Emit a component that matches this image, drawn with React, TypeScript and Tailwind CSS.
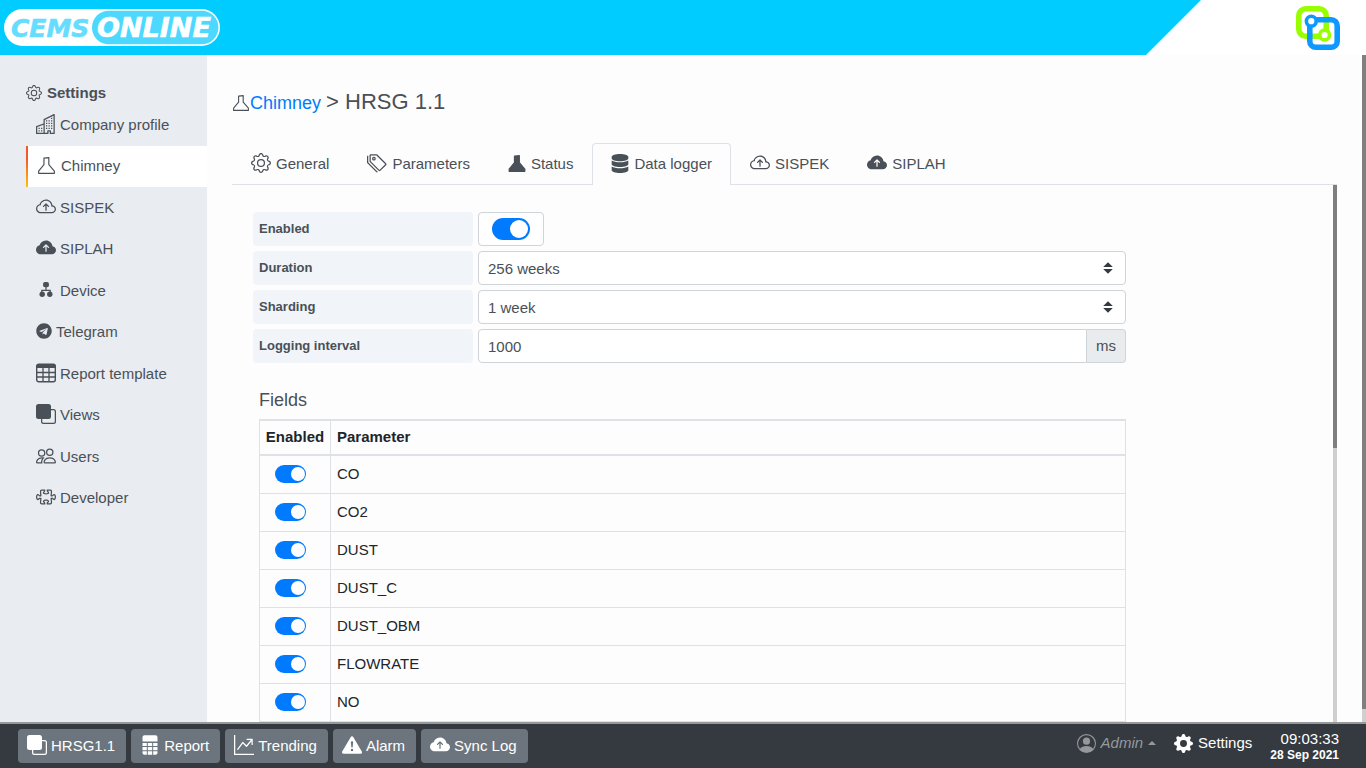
import { useState, type ReactNode } from "react";
import {
  BsBuildings,
  BsCloudArrowUp,
  BsCloudArrowUpFill,
  BsExclamationTriangleFill,
  BsFront,
  BsGear,
  BsGearFill,
  BsGraphUpArrow,
  BsPeople,
  BsPersonCircle,
  BsPuzzle,
  BsTags,
} from "react-icons/bs";
import { FaDatabase, FaTelegram } from "react-icons/fa";

function FlaskIcon({ filled = false, className }: { filled?: boolean; className?: string }) {
  return (
    <svg viewBox="0 0 16 16" className={className} aria-hidden="true">
      <path
        d="M5.6 1.1 10.2.6V7.2L15.4 13.2V15.4H.6V13.2L5.6 7.2Z"
        fill={filled ? "currentColor" : "none"}
        stroke="currentColor"
        strokeWidth="1.1"
        strokeLinejoin="round"
      />
    </svg>
  );
}

function DeviceIcon({ className }: { className?: string }) {
  return (
    <svg viewBox="0 0 20 20" className={className} aria-hidden="true">
      <rect x="7.1" y="2" width="5.8" height="5.2" rx="1.8" fill="currentColor" />
      <path d="M10 7v3.4M5.8 12v-1.6h8.4V12" fill="none" stroke="currentColor" strokeWidth="1.2" />
      <circle cx="6.2" cy="14.2" r="2.7" fill="currentColor" />
      <circle cx="13.8" cy="14.2" r="2.7" fill="currentColor" />
    </svg>
  );
}

function TableIcon({ className }: { className?: string }) {
  return (
    <svg viewBox="0 0 20 20" className={className} aria-hidden="true">
      <rect x=".7" y="1.2" width="18.6" height="17.6" rx="2" fill="none" stroke="currentColor" strokeWidth="1.4" />
      <path d="M.6 5V3a2 2 0 0 1 2-2h14.8a2 2 0 0 1 2 2v2Z" fill="currentColor" />
      <path d="M.6 9.5h18.8M.6 14h18.8M7 5v14M13 5v14" stroke="currentColor" strokeWidth="1.3" />
    </svg>
  );
}

function SheetIcon({ className }: { className?: string }) {
  return (
    <svg viewBox="0 0 16 20" className={className} fill="currentColor" aria-hidden="true">
      <path d="M.5 6.6V2.2A2 2 0 0 1 2.5.2h11a2 2 0 0 1 2 2v4.4Z" />
      <path d="M.5 8h4.3v3H.5ZM5.8 8h4.4v3H5.8ZM11.2 8h4.3v3h-4.3ZM.5 12h4.3v3.2H.5ZM5.8 12h4.4v3.2H5.8ZM11.2 12h4.3v3.2h-4.3ZM.5 16.2h4.3v3.6H2.5a2 2 0 0 1-2-2ZM5.8 16.2h4.4v3.6H5.8ZM11.2 16.2h4.3v1.6a2 2 0 0 1-2 2h-2.3Z" />
    </svg>
  );
}

function Wordmark() {
  return (
    <svg viewBox="0 0 216 37" className="ml-1 h-[37px] w-[216px]" role="img" aria-label="CEMS Online">
      <rect width="216" height="37" rx="18.5" fill="#fff" />
      <rect x="88" y="1.7" width="126.4" height="33.6" rx="16.8" fill="#4dd9ff" />
      <g fontFamily="'DejaVu Sans', sans-serif" fontWeight="700" fontStyle="italic" strokeWidth=".6">
        <text x="7" y="28" fontSize="25" fill="#66ddff" stroke="#66ddff">
          CEMS
        </text>
        <text x="93" y="28" fontSize="27" fill="#fff" stroke="#fff">
          ONLINE
        </text>
      </g>
    </svg>
  );
}

function BrandMark() {
  return (
    <svg viewBox="0 0 44 44" className="size-11" aria-hidden="true">
      <g fill="none" strokeWidth="5.6">
        <rect x="2.8" y="2.8" width="27.4" height="27.4" rx="7" stroke="#99ff00" />
        <rect x="13.8" y="13.8" width="27.4" height="27.4" rx="6" stroke="#0d99ff" />
      </g>
      <circle cx="15.3" cy="15.2" r="4.9" fill="#fff" stroke="#0d99ff" strokeWidth="3.6" />
      <circle cx="28.6" cy="29" r="4.9" fill="#fff" stroke="#99ff00" strokeWidth="3.6" />
    </svg>
  );
}

const menu: { label: string; icon: ReactNode; active?: boolean }[] = [
  { label: "Company profile", icon: <BsBuildings className="size-5" /> },
  { label: "Chimney", icon: <FlaskIcon className="h-[17px] w-[17px]" />, active: true },
  { label: "SISPEK", icon: <BsCloudArrowUp className="size-5" /> },
  { label: "SIPLAH", icon: <BsCloudArrowUpFill className="size-5" /> },
  { label: "Device", icon: <DeviceIcon className="size-5" /> },
  { label: "Telegram", icon: <FaTelegram className="size-4" /> },
  { label: "Report template", icon: <TableIcon className="size-5" /> },
  { label: "Views", icon: <BsFront className="size-5" /> },
  { label: "Users", icon: <BsPeople className="size-5" /> },
  { label: "Developer", icon: <BsPuzzle className="size-5" /> },
];

const tabs: { label: string; icon: ReactNode }[] = [
  { label: "General", icon: <BsGear className="size-5" /> },
  { label: "Parameters", icon: <BsTags className="size-5" /> },
  { label: "Status", icon: <FlaskIcon filled className="h-[17px] w-[18px]" /> },
  { label: "Data logger", icon: <FaDatabase className="h-[19px] w-[18px]" /> },
  { label: "SISPEK", icon: <BsCloudArrowUp className="size-5" /> },
  { label: "SIPLAH", icon: <BsCloudArrowUpFill className="size-5" /> },
];

const shortcuts: { label: string; icon: ReactNode }[] = [
  { label: "HRSG1.1", icon: <BsFront className="size-5" /> },
  { label: "Report", icon: <SheetIcon className="mx-[2px] h-5 w-4" /> },
  { label: "Trending", icon: <BsGraphUpArrow className="size-5" /> },
  { label: "Alarm", icon: <BsExclamationTriangleFill className="size-5" /> },
  { label: "Sync Log", icon: <BsCloudArrowUpFill className="size-5" /> },
];

const parameters = ["CO", "CO2", "DUST", "DUST_C", "DUST_OBM", "FLOWRATE", "NO"];

const fieldLabel = "flex items-center rounded bg-[#f1f4f9] px-1.5 text-[13px] font-bold";
const control = "h-[34px] w-full rounded border border-[#ced4da] bg-white px-[9px] text-[15px] text-[#495057]";

function SelectBox({ id, value }: { id: string; value: string }) {
  return (
    <div className="relative">
      <select id={id} className={`${control} appearance-none pt-0.5`} defaultValue={value}>
        <option>{value}</option>
      </select>
      <svg viewBox="0 0 10 12" className="pointer-events-none absolute top-[11px] right-[13px] h-3 w-2.5" aria-hidden="true">
        <path d="M5 .3 9.8 5H.2ZM5 11.7 9.8 7H.2Z" fill="#343a40" />
      </svg>
    </div>
  );
}

export default function App() {
  const [tab, setTab] = useState("Data logger");

  return (
    <div className="flex h-screen flex-col overflow-hidden bg-[#fdfdfd] font-['Liberation_Sans',Arial,sans-serif] text-[15px] text-[#495057]">
      <header className="flex h-[55px] shrink-0 items-center justify-between bg-white">
        <div className="flex h-full w-[calc(100%-165px)] items-center bg-[#00ccff] [clip-path:polygon(0_0,100%_0,calc(100%-55px)_100%,0_100%)]">
          <Wordmark />
        </div>
        <div className="pr-[26px]">
          <BrandMark />
        </div>
      </header>

      <div className="flex min-h-0 flex-1">
        <nav aria-label="Settings" className="w-[207px] shrink-0 bg-[#e9ecf1] pt-6 pl-[26px]">
          <div className="flex h-[25px] items-center gap-[5px] pt-0.5 leading-5 font-bold">
            <BsGear className="size-4" />
            Settings
          </div>
          <ul className="grid h-[415px] grid-rows-10 [&_svg]:mb-0.5">
            {menu.map((item) => (
              <li key={item.label}>
                <a
                  href="#"
                  aria-current={item.active ? "page" : undefined}
                  className={
                    item.active
                      ? "flex h-full items-center gap-1.5 border-l-2 bg-white pl-[10px] [border-image:linear-gradient(#f05a28_30%,#ffc20e)_1]"
                      : "flex h-full items-center gap-1 pl-[10px]"
                  }
                >
                  {item.icon}
                  {item.label}
                </a>
              </li>
            ))}
          </ul>
        </nav>

        <main className="flex min-w-0 flex-1 flex-col pr-[25px] pl-[25px]">
          <h1 className="mt-[33px] flex h-7 items-baseline text-[22px] leading-7">
            <FlaskIcon className="ml-px size-4 translate-y-0.5" />
            <a href="#" className="mr-[5px] ml-px text-lg leading-7 text-[#007bff]">
              Chimney
            </a>
            &gt; HRSG 1.1
          </h1>

          <div role="tablist" className="mt-[27px] flex h-[42px] shrink-0 border-b border-[#dee2e6] [&_svg]:mb-[3px]">
            {tabs.map((t) => (
              <button
                key={t.label}
                role="tab"
                type="button"
                aria-selected={t.label === tab}
                onClick={() => setTab(t.label)}
                className={
                  t.label === tab
                    ? "-mb-px flex items-center gap-[5px] rounded-t border border-b-0 border-[#dee2e6] bg-[#fdfdfd] px-[18px]"
                    : "-mb-px flex items-center gap-[5px] border border-b-0 border-transparent px-[18px]"
                }
              >
                {t.icon}
                {t.label}
              </button>
            ))}
          </div>

          <div className="flex min-h-0 flex-1">
            <section className="min-w-0 flex-1 overflow-hidden pt-[27px] pl-[21px]">
              <form className="max-w-[873px]">
                <div className="grid grid-cols-[220px_1fr] gap-[5px]">
                  <label htmlFor="enabled" className={fieldLabel}>
                    Enabled
                  </label>
                  <div className="flex h-[34px] w-[66px] items-center justify-center rounded border border-[#ced4da] bg-white">
                    <input
                      id="enabled"
                      type="checkbox"
                      role="switch"
                      defaultChecked
                      className="flex h-[22px] w-[38px] appearance-none items-center rounded-full bg-[#adb5bd] px-0.5 before:size-[18px] before:rounded-full before:bg-white checked:justify-end checked:bg-[#007bff]"
                    />
                  </div>
                  <label htmlFor="duration" className={fieldLabel}>
                    Duration
                  </label>
                  <SelectBox id="duration" value="256 weeks" />
                  <label htmlFor="sharding" className={fieldLabel}>
                    Sharding
                  </label>
                  <SelectBox id="sharding" value="1 week" />
                  <label htmlFor="interval" className={fieldLabel}>
                    Logging interval
                  </label>
                  <div className="flex">
                    <input id="interval" type="text" defaultValue="1000" className={`${control} min-w-0 flex-1 rounded-r-none`} />
                    <span className="flex items-center rounded-r border border-l-0 border-[#ced4da] bg-[#e9ecef] px-[9px]">ms</span>
                  </div>
                </div>

                <h2 className="mt-[25px] mb-1.5 pl-1.5 text-lg leading-[25px]">Fields</h2>
                <div className="pl-1.5">
                  <table className="w-full border-collapse border border-t-2 border-[#dee2e6] text-left text-[#212529]">
                    <thead>
                      <tr className="h-[35px] border-b-2 border-[#dee2e6]">
                        <th scope="col" className="w-[71px] border-r border-[#dee2e6] text-center">
                          Enabled
                        </th>
                        <th scope="col" className="px-1.5">
                          Parameter
                        </th>
                      </tr>
                    </thead>
                    <tbody>
                      {parameters.map((name) => (
                        <tr key={name} className="h-[38px] border-b border-[#dee2e6]">
                          <td className="border-r border-[#dee2e6] pl-[15px]">
                            <input
                              type="checkbox"
                              role="switch"
                              aria-label={name}
                              defaultChecked
                              className="flex h-[18px] w-[31px] appearance-none items-center rounded-full bg-[#adb5bd] px-px before:size-3.5 before:rounded-full before:bg-white checked:justify-end checked:bg-[#007bff]"
                            />
                          </td>
                          <td className="px-1.5">{name}</td>
                        </tr>
                      ))}
                    </tbody>
                  </table>
                </div>
              </form>
            </section>
            <div className="w-1 shrink-0 bg-[#cfcfcf]">
              <div className="h-[49%] bg-[#7f7f7f]" />
            </div>
          </div>
        </main>

        <div className="w-1 shrink-0 bg-[#cfcfcf]">
          <div className="h-[98%] bg-[#7f7f7f]" />
        </div>
      </div>

      <footer className="flex h-[46px] shrink-0 items-center border-t-2 border-[#95999c] bg-[#343a40] pr-[27px] pl-[18px] text-white">
        <div className="flex gap-[5px] [&_svg]:mb-[3px]">
          {shortcuts.map((s) => (
            <button key={s.label} type="button" className="flex h-[34px] items-center gap-1 rounded bg-[#6c757d] pr-[11px] pl-[9px]">
              {s.icon}
              {s.label}
            </button>
          ))}
        </div>
        <div className="ml-auto flex items-center">
          <button type="button" className="mr-[18px] flex items-center gap-[5px] pb-1.5 text-[#95999c]">
            <BsPersonCircle className="size-[19px]" />
            <span className="italic">Admin</span>
            <svg viewBox="0 0 8 4" className="h-1 w-2" aria-hidden="true">
              <path d="M4 0 8 4H0Z" fill="currentColor" />
            </svg>
          </button>
          <a href="#" className="mr-[18px] flex items-center gap-[5px] pb-1.5">
            <BsGearFill className="size-[19px]" />
            Settings
          </a>
          <div className="text-right">
            <div className="leading-[18px]">09:03:33</div>
            <div className="text-xs leading-[14px] font-bold">28 Sep 2021</div>
          </div>
        </div>
      </footer>
    </div>
  );
}
